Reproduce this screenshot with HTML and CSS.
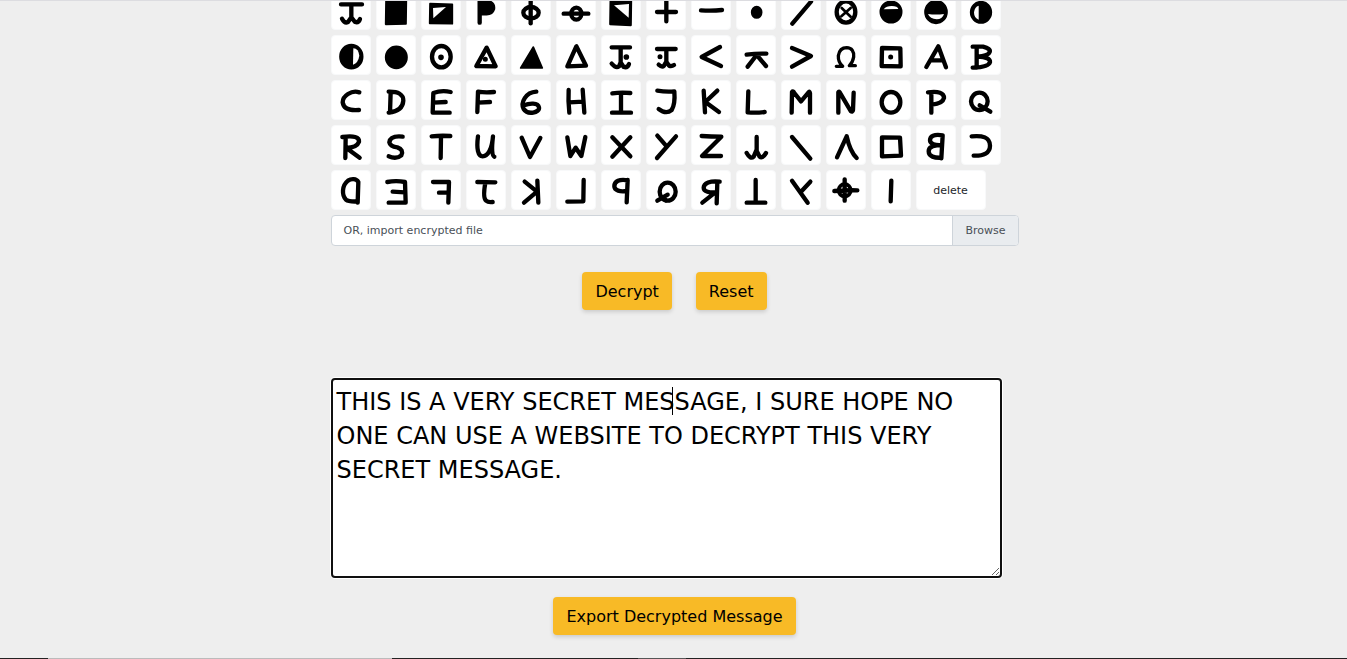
FILE: index.html
```html
<!DOCTYPE html>
<html lang="en">
<head>
    <meta charset="UTF-8">
    <meta name="viewport" content="width=device-width, initial-scale=1.0">
    <title>Decrypt</title>
    <link rel="stylesheet" href="styles.css">
</head>
<body>
    <main class="page">
        <div class="panel">
            <div class="keys" id="keys">
                <button type="button" class="key delete-key">delete</button>
            </div>

            <div class="file-row">
                <label class="file-name" for="cipherFile">OR, import encrypted file</label>
                <button type="button" class="browse-btn" id="browse">Browse</button>
                <input type="file" id="cipherFile" hidden>
            </div>

            <div class="actions">
                <button type="button" class="btn">Decrypt</button>
                <button type="button" class="btn">Reset</button>
            </div>

            <div class="message">
                <textarea class="message-text" aria-label="Decrypted message" spellcheck="false">THIS IS A VERY SECRET MESSAGE, I SURE HOPE NO ONE CAN USE A WEBSITE TO DECRYPT THIS VERY SECRET MESSAGE.</textarea>
                <span class="caret"></span>
            </div>

            <div class="export">
                <button type="button" class="btn">Export Decrypted Message</button>
            </div>
        </div>
    </main>
    <div class="bottom-line"></div>
    <script src="script.js"></script>
</body>
</html>
```
FILE: styles.css
```css
* {
    box-sizing: border-box;
}
body {
    margin: 0;
    min-height: 100vh;
    display: flex;
    flex-direction: column;
    background: #eee;
    color: #000;
    font-family: Verdana, "DejaVu Sans", sans-serif;
    font-size: 16px;
    overflow: hidden;
}
button {
    font-family: inherit;
    cursor: pointer;
}
.page {
    flex: 1;
    border-top: 1px solid #dcdce0;
    overflow: hidden;
}
.panel {
    width: 100%;
    max-width: 690px;
    margin: 0 auto;
    padding-left: 2px;
}
/* first row of keys is scrolled partly under the top edge */
.keys {
    display: flex;
    flex-wrap: wrap;
    gap: 5px;
    max-width: 676px;
    margin-top: -11px;
}
.key {
    width: 40px;
    height: 40px;
    padding: 0;
    background: #fff;
    border: 1px solid #f8f9fa;
    border-radius: 4px;
}
.key svg {
    display: block;
    width: 40px;
    height: 40px;
    margin: -1px;
    fill: none;
    stroke: #000;
    stroke-width: 13;
    stroke-linecap: round;
    stroke-linejoin: round;
}
.key .solid {
    fill: #000;
    stroke-width: 5;
}
.key .hole {
    fill: #fff;
    stroke: none;
}
.delete-key {
    width: 70px;
    color: #212529;
    font-size: 11px;
}
.file-row {
    display: flex;
    height: 31px;
    margin-top: 5px;
    background: #fff;
    border: 1px solid #ced4da;
    border-radius: 4px;
    overflow: hidden;
    color: #495057;
    font-size: 11px;
}
.file-name {
    flex: 1;
    padding: 0 12px;
    line-height: 30px;
}
.browse-btn {
    padding: 0 12px;
    background: #e9ecef;
    border: 0;
    border-left: 1px solid #ced4da;
    color: #495057;
    font-size: 11px;
    line-height: 30px;
}
.actions {
    display: flex;
    justify-content: center;
    gap: 24px;
    margin-top: 26px;
}
.btn {
    height: 38px;
    padding: 0 13px;
    background: #f8ba26;
    border: 0;
    border-radius: 4px;
    color: #000;
    font-size: 16px;
    box-shadow: 0 2px 4px rgba(0, 0, 0, 0.15);
}
.message {
    position: relative;
    max-width: 671px;
    margin-top: 68px;
}
.message-text {
    display: block;
    width: 100%;
    height: 200px;
    padding: 5px 4px;
    background: #fff;
    border: 2px solid #101010;
    border-radius: 4px;
    box-shadow: 0 0 0 1px #fff;
    color: #000;
    font-family: inherit;
    font-size: 24px;
    line-height: 34px;
    outline: none;
    resize: both;
}
.caret {
    position: absolute;
    top: 9px;
    left: 341px;
    width: 1px;
    height: 28px;
    background: #000;
}
.export {
    display: flex;
    justify-content: center;
    margin: 19px 0;
}
.bottom-line {
    height: 1px;
    background: linear-gradient(to right, #222 48px, #bbb 48px, #bbb 392px, #222 392px, #222 638px, #555 638px, #555 686px, #222 686px);
}
```
FILE: script.js
```js
const p = d => `<path d="${d}"/>`;
const solid = d => `<path class="solid" d="${d}"/>`;
const hole = d => `<path class="hole" d="${d}"/>`;
const ring = (x, y, rx, ry) => `<ellipse cx="${x}" cy="${y}" rx="${rx}" ry="${ry}"/>`;
const disc = (x, y, rx, ry) => `<ellipse class="solid" cx="${x}" cy="${y}" rx="${rx - 2}" ry="${ry - 2}"/>`;

// every symbol is drawn on a 120 x 120 grid
const symbols = [
    ['anchor', p('M30 43H93M61 43V84M33 86Q41 101 51 96L61 82L72 96Q83 99 87 87')],
    ['square filled', solid('M30 34L91 34L90 102L29 103Z')],
    ['square lower half', solid('M27 41L94 43L94 101L26 100Z') + hole('M36 54L75 51L37 85Z')],
    ['flag', p('M41 34V98') + solid('M40 32H67Q88 38 85 58Q80 74 62 74H42Z')],
    ['phi', p('M59 28V100') + ring(60, 68, 23, 17)],
    ['ring on line', p('M23 71H97') + ring(61, 71, 15, 18)],
    ['square left half', solid('M28 34H91L90 106L27 103Z') + hole('M39 46L84 42L83 83Z')],
    ['plus', p('M33 66H90M61 34V94')],
    ['minus', p('M30 61Q64 63 93 60')],
    ['dot', disc(62, 67, 17, 19)],
    ['slash', p('M34 101L90 35')],
    ['ring cross', ring(60, 66, 28, 32) + '<path stroke-width="8" d="M47 54L74 80M74 54L46 79"/>'],
    ['circle lower half', disc(60, 66, 34, 34) + hole('M38 58Q46 48 62 48Q80 48 82 57Z')],
    ['circle upper half', disc(60, 66, 35, 36) + hole('M36 72Q60 75 84 72Q79 88 62 88Q42 87 36 72Z')],
    ['circle right half', disc(60, 67, 33, 34) + hole('M53 47V89Q39 84 39 67Q41 50 53 47Z')],

    ['circle left half', disc(61, 65, 36, 38) + hole('M67 40Q83 41 85 62Q82 83 66 89Z')],
    ['circle filled', disc(61, 67, 34, 35)],
    ['ring dot', ring(61, 65, 28, 32) + disc(60, 67, 8, 8)],
    ['triangle dot', p('M62 38L31 93L89 94Z') + disc(58, 73, 7, 7)],
    ['triangle filled', solid('M67 36L29 99L94 99Z')],
    ['triangle', p('M61 34L34 94L90 92Z')],
    ['anchor right dot', p('M32 37H87M59 38V84M32 86Q45 101 54 94L59 82L68 96Q80 99 84 87') + disc(76, 66, 8, 8)],
    ['anchor left dot', p('M33 42H89M61 42V84M38 89Q48 98 54 92L61 80L69 92Q77 95 84 90') + disc(42, 65, 7, 7)],
    ['less', p('M87 36L32 66L90 93')],
    ['low T split', p('M32 59Q60 55 91 56M62 60L35 95M62 60L90 93')],
    ['greater', p('M33 39L90 63L33 95')],
    ['omega', '<path stroke-width="10" d="M31 94H50Q36 82 37 62Q41 38 62 38Q85 39 83 66Q80 83 70 92H88"/>'],
    ['square dot', p('M33 39L88 40L89 94L32 93Z') + disc(59, 66, 7, 7)],
    ['A', p('M31 96L67 34L90 97M44 76H80')],
    ['B', p('M47 36V98M35 35H66Q90 41 86 51Q82 63 50 65Q88 66 87 81Q83 97 35 98')],

    ['C', p('M85 37Q68 31 51 42Q35 52 35 67Q39 94 84 90')],
    ['D', p('M44 36L42 98M38 35Q82 34 82 62Q80 94 38 98')],
    ['E', p('M89 36Q62 30 37 39L35 98L86 98M37 68L74 66')],
    ['F', p('M84 36Q58 39 36 35L34 96M36 68L72 66')],
    ['6', p('M76 35C44 37 28 67 38 87C50 106 87 98 84 82C81 67 55 69 39 76')],
    ['H', p('M38 30Q36 64 40 98M80 29L85 98M40 67L82 65')],
    ['I', p('M34 40Q60 36 88 39M60 40V96M33 98H90')],
    ['J', p('M34 32Q60 36 85 34Q88 72 77 90Q60 104 38 87')],
    ['K', p('M38 32L42 97M79 32L43 66L84 96')],
    ['L', p('M37 34L35 97Q60 99 86 96')],
    ['M', p('M32 98L33 36Q36 32 40 39L60 64L82 38Q86 32 87 40V98')],
    ['N', p('M37 98L37 37Q39 32 43 40L74 93Q80 98 81 90L83 38')],
    ['O', ring(60, 67, 28, 31)],
    ['P', p('M46 38V98M36 37Q84 31 84 54Q80 71 48 74')],
    ['Q', ring(55, 64, 25, 26) + p('M56 76L88 95')],

    ['R', p('M44 36L43 99M34 36Q86 29 84 50Q78 67 46 69L86 98')],
    ['S', p('M80 35Q43 31 40 52Q42 64 64 67Q84 74 76 91Q61 104 38 94')],
    ['T', p('M32 34Q60 31 88 33M60 34L59 99')],
    ['U', p('M36 34C31 72 36 94 50 94C66 94 78 72 81 34Q74 91 85 95')],
    ['V', p('M32 38L57 96L88 39')],
    ['W', p('M34 37L43 93L59 68L76 93L88 36')],
    ['X', p('M34 37L88 94M88 37L34 95')],
    ['Y', p('M34 32L62 64M90 34L33 99')],
    ['Z', p('M32 33Q60 35 91 35L33 93H90')],
    ['low anchor', p('M62 36V82M32 84Q43 104 53 95L61 76L71 95Q79 102 90 84')],
    ['backslash', p('M33 36L88 101')],
    ['lambda', p('M33 97L62 34Q72 80 92 99')],
    ['square', p('M33 37L87 38L90 92L33 94Z')],
    ['B mirrored', p('M80 31L76 100M80 31C54 27 42 33 42 46C42 57 58 62 78 60C52 60 38 66 38 79C38 95 56 99 76 98')],
    ['C mirrored', p('M32 34C64 31 87 36 87 62C87 84 68 93 38 92')],

    ['D mirrored', p('M80 98L82 36C76 25 60 26 51 32C32 47 32 76 45 89C53 95 65 94 80 95')],
    ['E mirrored', p('M34 36Q60 31 87 36L89 98H38M50 65L86 67')],
    ['F mirrored', p('M36 36H84L82 98M54 68H82')],
    ['J mirrored', p('M34 36L88 37M58 38Q50 84 60 92Q67 98 80 96')],
    ['K mirrored', p('M79 32L82 98M41 35L78 65L39 98')],
    ['L mirrored', p('M83 30L82 94L34 95')],
    ['P mirrored', p('M80 30L77 97M80 31C56 26 40 34 40 49C40 62 58 66 77 63')],
    ['Q mirrored', ring(65, 65, 24, 27) + p('M65 74L34 92M50 84L60 91')],
    ['R mirrored', p('M86 35C58 31 38 40 38 53C38 65 56 69 76 67M79 36L77 100M72 68L34 98')],
    ['T turned', p('M59 30V96M32 98H88')],
    ['Y mirrored', p('M33 32L80 98M88 35L60 65')],
    ['crosshair', '<circle cx="56" cy="61" r="18" stroke-width="12"/>' + p('M56 28V92M25 63Q60 60 94 61')],
    ['bar', p('M61 32L59 94')]
];

const keys = document.getElementById('keys');
const deleteKey = keys.querySelector('.delete-key');

symbols.forEach(([name, drawing]) => {
    const key = document.createElement('button');
    key.type = 'button';
    key.className = 'key';
    key.setAttribute('aria-label', name);
    key.innerHTML = `<svg viewBox="0 0 120 120">${drawing}</svg>`;
    keys.insertBefore(key, deleteKey);
});

document.getElementById('browse').addEventListener('click', () => {
    document.getElementById('cipherFile').click();
});
```
